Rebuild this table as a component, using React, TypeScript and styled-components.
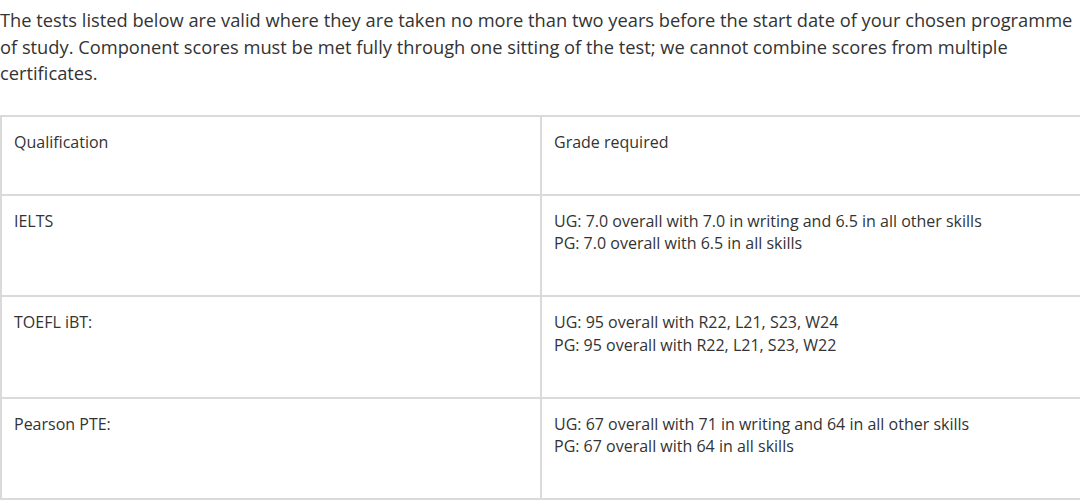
import React from "react";
import styled, { createGlobalStyle } from "styled-components";

const Global = createGlobalStyle`
  html, body { margin: 0; padding: 0; background: #fff; overflow: hidden; }
  body { font-family: "Open Sans", "Liberation Sans", sans-serif; color: #333; }
`;

const Page = styled.div`
  width: 1080px;
  overflow: hidden;
`;

const Intro = styled.p`
  margin: 0;
  padding-top: 7px;
  font-size: 18.3px;
  line-height: 26.5px;
  color: #333;
`;

const Table = styled.table`
  margin-top: 28px;
  width: 1120px;
  border-collapse: collapse;
  table-layout: fixed;
`;

const Col = styled.col<{ $w?: number }>`
  width: ${(p) => (p.$w ? `${p.$w}px` : "auto")};
`;

const Cell = styled.td`
  border: 2px solid #dadada;
  padding: 14px 12px 0 12px;
  vertical-align: top;
  font-size: 16px;
  line-height: 22.5px;
  color: #333;
`;

const CellText = styled.div`
  margin-bottom: 40.5px;
`;

const rows: [string, string[]][] = [
  ["Qualification", ["Grade required"]],
  [
    "IELTS",
    [
      "UG: 7.0 overall with 7.0 in writing and 6.5 in all other skills",
      "PG: 7.0 overall with 6.5 in all skills",
    ],
  ],
  [
    "TOEFL iBT:",
    ["UG: 95 overall with R22, L21, S23, W24", "PG: 95 overall with R22, L21, S23, W22"],
  ],
  [
    "Pearson PTE:",
    [
      "UG: 67 overall with 71 in writing and 64 in all other skills",
      "PG: 67 overall with 64 in all skills",
    ],
  ],
];

export default function App() {
  return (
    <Page>
      <Global />
      <Intro>
        The tests listed below are valid where they are taken no more than two years before the
        start date of your chosen programme of study. Component scores must be met fully through
        one sitting of the test; we cannot combine scores from multiple certificates.
      </Intro>
      <Table>
        <colgroup>
          <Col $w={540} />
          <Col />
        </colgroup>
        <tbody>
          {rows.map(([q, g]) => (
            <tr key={q}>
              <Cell>
                <CellText>{q}</CellText>
              </Cell>
              <Cell>
                <CellText>
                  {g.map((l, i) => (
                    <React.Fragment key={i}>
                      {i > 0 && <br />}
                      {l}
                    </React.Fragment>
                  ))}
                </CellText>
              </Cell>
            </tr>
          ))}
        </tbody>
      </Table>
    </Page>
  );
}
